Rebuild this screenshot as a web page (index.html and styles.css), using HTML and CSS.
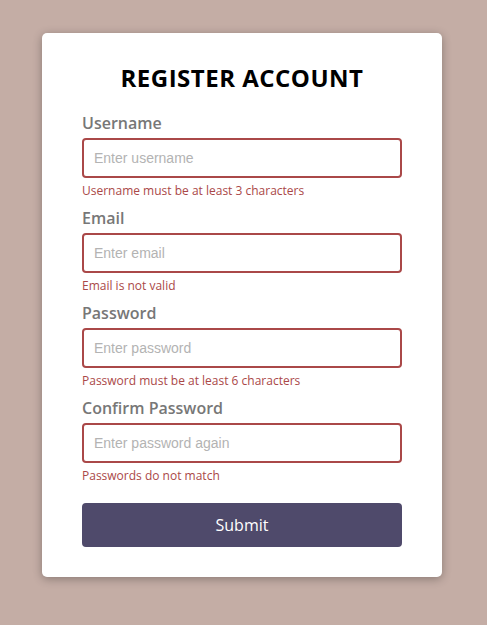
FILE: index.html
```html
<!DOCTYPE html>
<html lang="en">
<head>
<meta charset="UTF-8">
<title>Register Account</title>
<link rel="stylesheet" href="styles.css">
</head>
<body>
<div class="container">
  <form class="form">
    <h2 class="title">REGISTER ACCOUNT</h2>
    <div class="form-control error">
      <label for="username">Username</label>
      <input type="text" id="username" placeholder="Enter username">
      <small>Username must be at least 3 characters</small>
    </div>
    <div class="form-control error">
      <label for="email">Email</label>
      <input type="text" id="email" placeholder="Enter email">
      <small>Email is not valid</small>
    </div>
    <div class="form-control error">
      <label for="password">Password</label>
      <input type="password" id="password" placeholder="Enter password">
      <small>Password must be at least 6 characters</small>
    </div>
    <div class="form-control error">
      <label for="password2">Confirm Password</label>
      <input type="password" id="password2" placeholder="Enter password again">
      <small>Passwords do not match</small>
    </div>
    <button type="submit" class="submit">Submit</button>
  </form>
</div>
</body>
</html>
```

FILE: styles.css
```css
* { box-sizing: border-box; }

body {
  margin: 0;
  background: #c4ada5;
  font-family: "Open Sans", "Noto Sans", sans-serif;
  display: flex;
  justify-content: center;
  padding-top: 33px;
  min-height: 100vh;
}

.container {
  background: #fff;
  border-radius: 5px;
  box-shadow: 0 2px 10px rgba(0, 0, 0, 0.3);
  width: 400px;
  margin-left: -3px;
  align-self: flex-start;
}

.form {
  padding: 30px 40px;
}

.title {
  text-align: center;
  margin: 0 0 20px;
  font-size: 24px;
  line-height: 30px;
  font-weight: 700;
  letter-spacing: 0.5px;
  color: #000;
}

.form-control {
  margin-bottom: 10px;
  padding-bottom: 20px;
  position: relative;
}

.form-control label {
  color: #777;
  display: block;
  margin-bottom: 5px;
  font-weight: 600;
  font-size: 16px;
  line-height: 20px;
}

.form-control input {
  border: 2px solid #f0f0f0;
  border-radius: 4px;
  display: block;
  width: 100%;
  padding: 10px;
  font-family: "Liberation Sans", Arial, sans-serif;
  font-size: 14px;
  line-height: 16px;
  outline: none;
}

.form-control input::placeholder {
  color: #b3b3b3;
}

.form-control.error input {
  border-color: #aa4848;
}

.form-control small {
  color: #aa4848;
  position: absolute;
  bottom: 0;
  left: 0;
  font-size: 12px;
  line-height: 15px;
}

.submit {
  background: #4f4a6b;
  border: 2px solid #4f4a6b;
  border-radius: 4px;
  color: #fff;
  display: block;
  font-family: "Open Sans", "Noto Sans", sans-serif;
  font-size: 16px;
  line-height: 20px;
  padding: 10px;
  margin-top: 20px;
  width: 100%;
  cursor: pointer;
}
```
